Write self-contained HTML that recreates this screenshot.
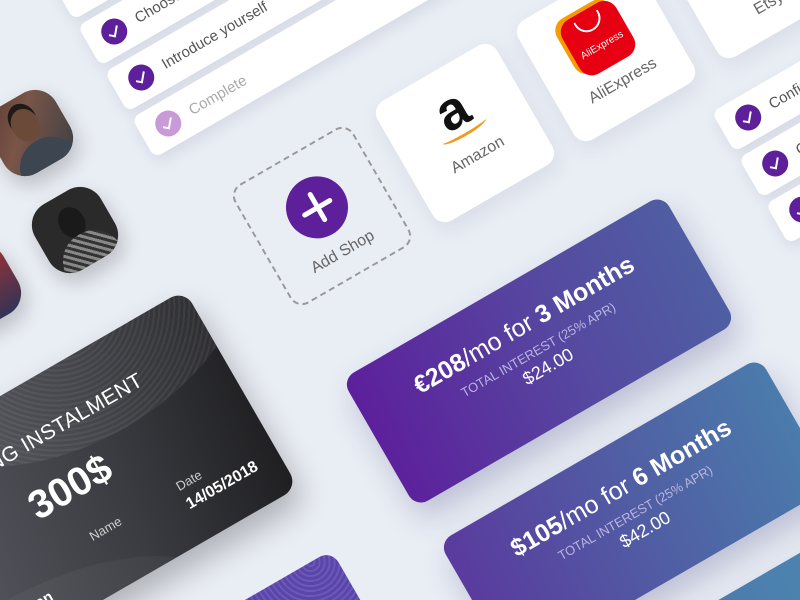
<!DOCTYPE html>
<html style="overflow:hidden;width:800px;height:600px"><head><meta charset="utf-8">
<style>
*{margin:0;padding:0;box-sizing:border-box}
body{width:800px;height:600px;overflow:hidden;background:#e9edf4;font-family:"Liberation Sans",sans-serif;position:relative}
.r{position:absolute;transform:rotate(-30deg)}
.row{background:#fff;border-radius:8px;box-shadow:0 6px 14px rgba(120,130,160,.18);height:46px;width:420px;display:flex;align-items:center;padding-left:16px;font-size:15px;color:#555}
.ck{width:26px;height:26px;border-radius:50%;background:#5e1f9a;margin-right:12px;position:relative;flex:none}
.ck:after{content:"";position:absolute;left:9px;top:6px;width:5px;height:10px;border:solid #fff;border-width:0 2px 2px 0;transform:rotate(40deg)}
.shop{background:#fff;border-radius:14px;box-shadow:0 8px 20px rgba(120,130,160,.15);width:138px;height:138px;text-align:center;color:#666;font-size:16px}
.pay{border-radius:14px;width:370px;height:148px;color:#fff;text-align:center;box-shadow:0 16px 30px rgba(60,60,120,.25)}
.pay .h{font-size:25px;margin-top:30px}
.pay .h b{font-weight:bold}
.pay .s{font-size:13px;color:#b9b4e0;margin-top:6px}
.pay .a{font-size:18px;margin-top:2px}
.av{border-radius:24px;width:76px;height:76px;box-shadow:0 10px 20px rgba(0,0,0,.2);overflow:hidden}
</style></head><body>

<!-- left checklist -->
<div class="r row" style="left:34px;top:-128px"><div class="ck"></div>Choose your</div>
<div class="r row" style="left:61px;top:-82px"><div class="ck"></div>Choose your</div>
<div class="r row" style="left:88px;top:-36px"><div class="ck"></div>Introduce yourself</div>
<div class="r row" style="left:115px;top:10px;color:#aaa"><div class="ck" style="background:#c89ad7"></div>Complete</div>

<!-- right checklist -->
<div class="r row" style="left:703px;top:34px;width:300px"><div class="ck"></div>Confirm</div>
<div class="r row" style="left:730px;top:80px;width:300px"><div class="ck"></div>Choose</div>
<div class="r row" style="left:757px;top:126px;width:300px"><div class="ck"></div>C</div>

<!-- avatars -->
<div class="r av" style="left:-8px;top:95px;background:linear-gradient(135deg,#5a3a30,#7a5548 40%,#3b3f45)">
  <div style="position:absolute;left:24px;top:12px;width:28px;height:34px;border-radius:50%;background:#6b4a3a;box-shadow:0 -6px 0 #1e1a18"></div>
  <div style="position:absolute;left:8px;top:48px;width:62px;height:40px;border-radius:30px 30px 0 0;background:#3d4650"></div>
</div>
<div class="r av" style="left:37px;top:192px;background:#2a2a2a">
  <div style="position:absolute;left:26px;top:14px;width:26px;height:32px;border-radius:50%;background:#1a1a1a"></div>
  <div style="position:absolute;left:8px;top:44px;width:62px;height:40px;border-radius:30px 30px 0 0;background:repeating-linear-gradient(45deg,#888 0 3px,#333 3px 6px)"></div>
</div>
<div class="r av" style="left:-60px;top:250px;background:linear-gradient(#a33,#335)"></div>

<!-- shops -->
<div class="r shop" style="left:253px;top:147px;border:2px dashed #999;background:none;box-shadow:none">
  <div style="width:62px;height:62px;border-radius:50%;background:#5e1f9a;margin:26px auto 0;position:relative">
    <div style="position:absolute;left:29px;top:14px;width:5px;height:34px;background:#fff;border-radius:3px"></div>
    <div style="position:absolute;left:14px;top:29px;width:34px;height:5px;background:#fff;border-radius:3px"></div>
  </div>
  <div style="margin-top:12px">Add Shop</div>
</div>
<div class="r shop" style="left:396px;top:64px">
  <div style="font-size:54px;font-weight:bold;color:#111;margin-top:16px;line-height:54px">a</div>
  <div style="width:50px;height:10px;border-bottom:3px solid #f29a1b;border-radius:0 0 50% 50%;margin:-8px auto 0"></div>
  <div style="margin-top:14px">Amazon</div>
</div>
<div class="r shop" style="left:537px;top:-17px">
  <div style="width:62px;height:62px;border-radius:14px;background:#e60012;box-shadow:-4px -4px 0 #f99a00;margin:22px auto 0;position:relative;color:#fff;font-size:10px">
    <div style="position:absolute;left:17px;top:6px;width:28px;height:16px;border:2px solid #fff;border-top:none;border-radius:0 0 14px 14px"></div>
    <div style="position:absolute;top:34px;width:100%">AliExpress</div>
  </div>
  <div style="margin-top:10px">AliExpress</div>
</div>
<div class="r shop" style="left:680px;top:-100px"><div style="margin-top:100px">Etsy</div></div>

<!-- dark card -->
<div class="r" style="left:-104px;top:367px;width:370px;height:228px;border-radius:16px;overflow:hidden;background:linear-gradient(100deg,#5c5d66,#3a3b40 60%,#1f1f22);box-shadow:0 16px 30px rgba(0,0,0,.25);color:#fff">
  <div style="position:absolute;left:40px;top:-190px;width:420px;height:280px;border-radius:50%;background:repeating-radial-gradient(circle,rgba(255,255,255,.05) 0 3px,rgba(255,255,255,.1) 3px 5px)"></div>
  <div style="position:absolute;left:-160px;top:180px;width:420px;height:200px;border-radius:50%;background:rgba(255,255,255,.04)"></div>
  <div style="position:absolute;left:26px;top:44px;font-size:21px;letter-spacing:.5px">UPCOMING INSTALMENT</div>
  <div style="position:absolute;left:128px;top:92px;font-size:40px;font-weight:bold">300$</div>
  <div style="position:absolute;left:265px;top:160px;font-size:13px;color:#ccc">Date</div>
  <div style="position:absolute;left:265px;top:180px;font-size:16px;font-weight:bold">14/05/2018</div>
  <div style="position:absolute;left:165px;top:160px;font-size:13px;color:#ccc">Name</div>
  <div style="position:absolute;left:0px;top:190px;font-size:15px;font-weight:bold">John Freeman</div>
</div>

<!-- pay cards -->
<div class="r pay" style="left:354px;top:277px;background:linear-gradient(95deg,#5d1f9c,#554aa0 60%,#4f5fa3)">
  <div class="h"><b>€208</b>/mo for <b>3 Months</b></div>
  <div class="s">TOTAL INTEREST (25% APR)</div>
  <div class="a">$24.00</div>
</div>
<div class="r pay" style="left:451px;top:440px;background:linear-gradient(95deg,#5a3a9e,#5060a4 55%,#4a7dac)">
  <div class="h"><b>$105</b>/mo for <b>6 Months</b></div>
  <div class="s">TOTAL INTEREST (25% APR)</div>
  <div class="a">$42.00</div>
</div>
<div class="r pay" style="left:548px;top:603px;background:linear-gradient(95deg,#4f6aa8,#4a8ab0)"></div>

<div class="r" style="left:145px;top:600px;width:240px;height:150px;border-radius:14px;background:repeating-radial-gradient(circle at 90% 0,#5a45a8 0 3px,#6b58b8 3px 5px)"></div>

</body></html>
